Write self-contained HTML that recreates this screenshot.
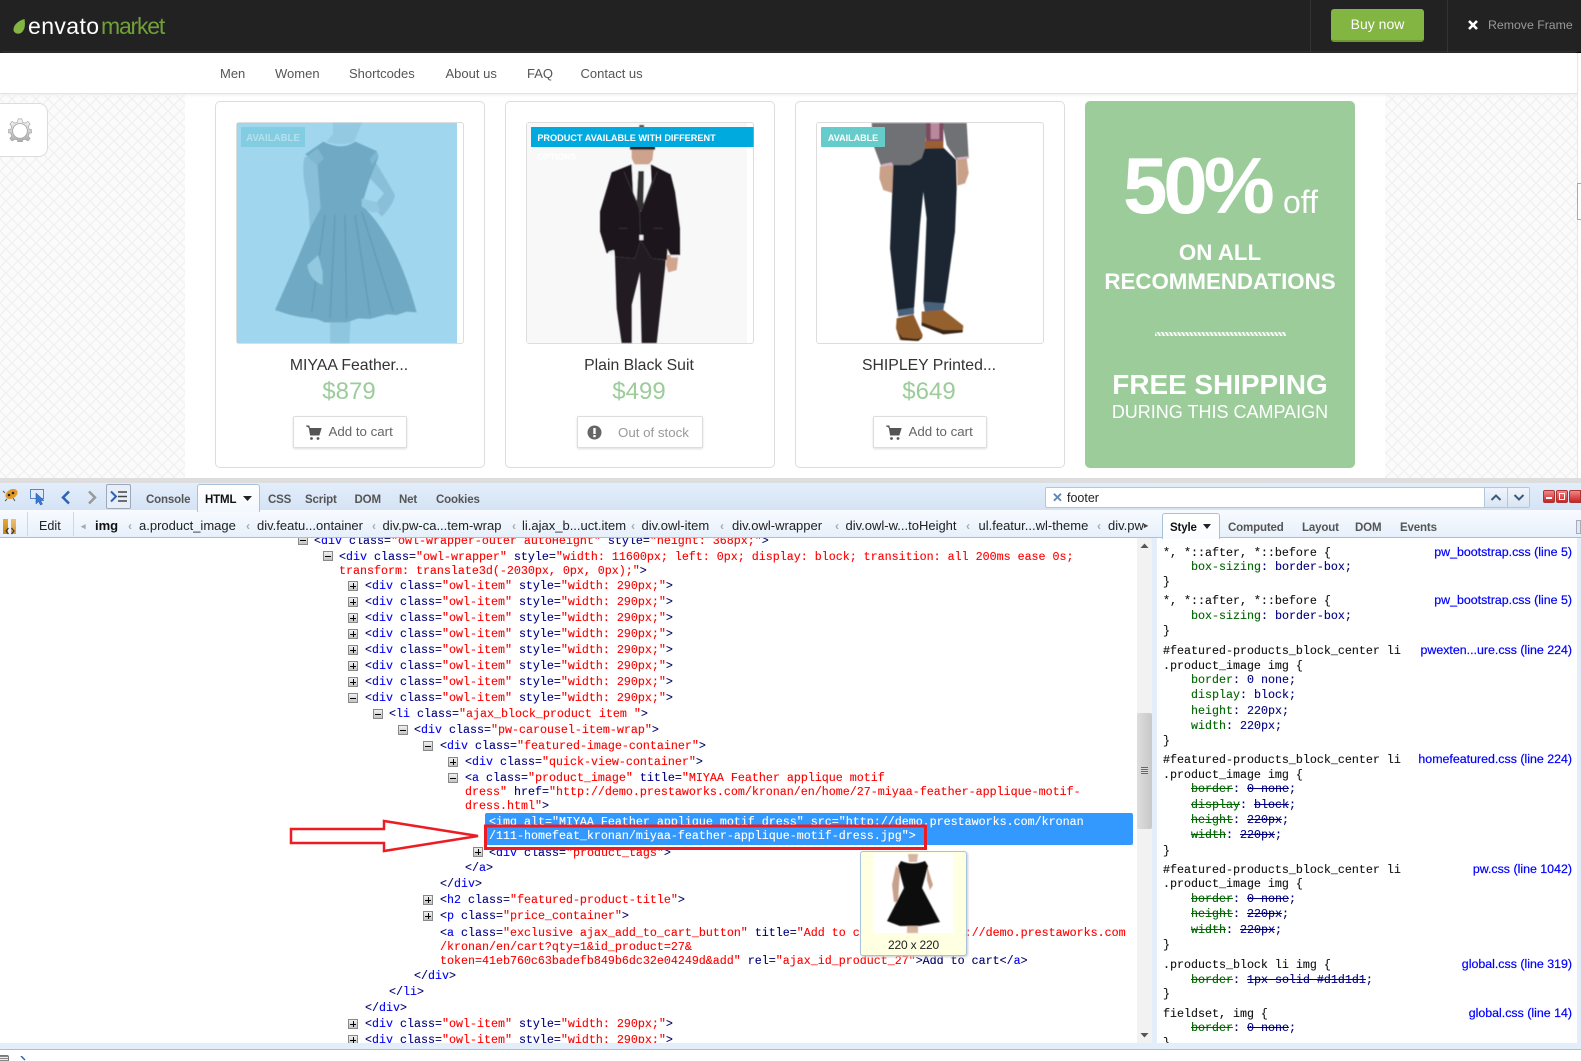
<!DOCTYPE html>
<html><head><meta charset="utf-8"><title>Envato market preview</title>
<style>
html,body{margin:0;padding:0;background:#fff}
#p{position:relative;width:1581px;height:1061px;overflow:hidden;background:#fff;font-family:"Liberation Sans",sans-serif}
.a{position:absolute}
.t{position:absolute;white-space:pre;line-height:20px;height:20px}
.l{position:absolute;white-space:pre;line-height:14px;height:14px;margin-top:1px;font:11.67px/14px "Liberation Mono",monospace;color:#00006a;-webkit-text-stroke:.12px currentColor}
.l b{font-weight:normal;color:#0000f0}
.l i{font-style:normal;color:#000080}
.l u{text-decoration:none;color:#f00}
.l s{text-decoration:line-through}
.l .g{color:#006400}
.l .v{color:#000080}
.l.k{color:#111}
.h{position:absolute;left:1172px;width:400px;text-align:right;font:12.4px/14px "Liberation Sans",sans-serif;color:#00f;-webkit-text-stroke:.2px #00f}
.x{position:absolute;width:8px;height:8px;border:1px solid #888;background:linear-gradient(#f0f0f0,#c4c4c4)}
.x:before{content:"";position:absolute;left:1px;top:3.500px;width:6px;height:1px;background:#000}
.x.p:after{content:"";position:absolute;left:3.500px;top:1px;width:1px;height:6px;background:#000}
.card{position:absolute;top:101px;height:367px;background:#fff;border:1px solid #ddd;border-radius:5px;box-sizing:border-box}
.frame{position:absolute;top:122px;height:222px;width:228px;border:1px solid #ddd;border-radius:3px;box-sizing:border-box;background:#fff}
.title{position:absolute;top:356px;width:268px;text-align:center;font-size:15.800px;line-height:20px;color:#333}
.price{position:absolute;top:377px;width:268px;text-align:center;font-size:24px;line-height:30px;color:#9bcc9a}
.btn{position:absolute;top:416px;height:32px;background:#fff;border:1px solid #ddd;border-radius:2px;box-shadow:0 1px 2px #ddd;box-sizing:border-box}
.tab{position:absolute;top:490px;font:bold 11.5px/20px "Liberation Sans",sans-serif;letter-spacing:-.15px;color:#555;white-space:pre}
.cr{position:absolute;top:516px;font:13px/20px "Liberation Sans",sans-serif;color:#222;white-space:pre}
.ar{position:absolute;top:516px;font:bold 12px/20px "Liberation Sans",sans-serif;color:#aaa}
.st{position:absolute;top:518px;font:bold 11.5px/20px "Liberation Sans",sans-serif;letter-spacing:-.15px;color:#555;white-space:pre}
.nv{position:absolute;top:64px;font-size:13px;line-height:20px;color:#555;white-space:pre}
.gt{position:absolute;left:1085px;width:270px;text-align:center;color:#fff;white-space:pre}
</style></head><body><div id="p">

<!-- page background pattern -->
<svg class="a" style="left:0;top:93px" width="1581" height="385">
<defs><pattern id="w" width="12" height="12" patternUnits="userSpaceOnUse"><rect width="12" height="12" fill="#fbfbfb"/><path d="M0 6L6 0M6 12L12 6M0 6L6 12M6 0L12 6" stroke="#f0f0f0" stroke-width="1.200" fill="none"/></pattern>
<filter id="bl" x="-5%" y="-5%" width="110%" height="110%"><feGaussianBlur stdDeviation="1.500"/></filter>
<filter id="bs" x="-5%" y="-5%" width="110%" height="110%"><feGaussianBlur stdDeviation=".4"/></filter></defs>
<rect width="185" height="385" fill="url(#w)"/><rect x="1385" width="192" height="385" fill="url(#w)"/></svg>

<!-- top bar -->
<div class="a" style="left:0;top:0;width:1581px;height:52px;background:#222;border-bottom:1px solid #000"></div>
<div class="a" style="left:1310px;top:0;width:1px;height:52px;background:#333"></div>
<div class="a" style="left:1447px;top:0;width:1px;height:52px;background:#333"></div>
<svg class="a" style="left:12px;top:18px" width="15" height="17"><path d="M12.500 1C13.500 7 13 12 9 15C6 16.500 2.500 15.500 1.500 12.500C1 8 5 3 12.500 1Z" fill="#82b541"/></svg>
<div class="t" style="left:28px;top:14px;line-height:24px;height:24px;font-size:23px;letter-spacing:.4px;color:#fff">envato</div>
<div class="t" style="left:101px;top:14px;line-height:24px;height:24px;font-size:23px;letter-spacing:-1.200px;color:#70a038;font-weight:normal">market</div>
<div class="a" style="left:1331px;top:9px;width:93px;height:33px;box-sizing:border-box;background:#82b541;border-bottom:2px solid #6a9a2f;border-radius:3px;text-align:center;color:#fff;font-size:14px;line-height:31px">Buy now</div>
<svg class="a" style="left:1467px;top:19px" width="12" height="12"><path d="M2 2L10 10M10 2L2 10" stroke="#fff" stroke-width="2.600"/></svg>
<div class="t" style="left:1488px;top:15px;font-size:12.300px;color:#999">Remove Frame</div>

<!-- nav -->
<div class="a" style="left:0;top:53px;width:1577px;height:40px;background:#fff;border-bottom:1px solid #e3e3e3;box-shadow:0 1px 3px #eee"></div>
<div class="a" style="left:1577px;top:53px;width:1px;height:425px;background:#e6e6e6"></div>
<div class="a" style="left:1577px;top:183px;width:4px;height:37px;background:#fff;border:1px solid #aaa;border-right:0;box-sizing:border-box"></div>
<div class="nv" style="left:220px">Men</div>
<div class="nv" style="left:275px">Women</div>
<div class="nv" style="left:349px">Shortcodes</div>
<div class="nv" style="left:445.500px">About us</div>
<div class="nv" style="left:527px">FAQ</div>
<div class="nv" style="left:580.500px">Contact us</div>

<!-- gear -->
<div class="a" style="left:-10px;top:103px;width:58px;height:54px;background:#fff;border:1px solid #ddd;border-radius:9px;box-sizing:border-box"></div>
<svg class="a" style="left:8px;top:118px" width="24" height="24" viewBox="0 0 26 26"><defs><linearGradient id="gg" x1="0" y1="0" x2="0" y2="1"><stop offset="0" stop-color="#f8f8f8"/><stop offset="1" stop-color="#aaa"/></linearGradient></defs><path d="M11 1H15L15.700 4.500L18.500 5.600L21.500 3.600L24 6.500L22 9.300L23 12L26 12.800V16L23 16.700L22 19.500L24 22.300L21.500 24.800L18.500 23L15.700 24V26H10.500V24L7.500 23L4.500 24.800L2 22.300L4 19.500L3 16.700L0 16V12.800L3 12L4 9.300L2 6.500L4.500 3.600L7.500 5.600L10.300 4.500Z" fill="url(#gg)" stroke="#999" stroke-width=".6"/><circle cx="13" cy="14" r="8" fill="#fff" stroke="#aaa"/></svg>

<!-- cards -->
<div class="card" style="left:215px;width:270px"></div>
<div class="card" style="left:505px;width:270px"></div>
<div class="card" style="left:795px;width:270px"></div>

<div class="frame" style="left:236px"></div>
<div class="frame" style="left:526px"></div>
<div class="frame" style="left:816px"></div>

<!-- dress -->
<svg class="a" style="left:230px;top:115px" width="240" height="235" viewBox="0 0 720 705">
<rect x="21" y="24" width="660" height="660" fill="#a0d7ef"/>
<g filter="url(#bl)">
<path d="M308 24H395L385 50L372 80Q330 95 290 80L310 55Z" fill="#93c9e1"/>
<path d="M300 620V684H358L362 620Z" fill="#8fc6df"/>
<path d="M224 125Q212 170 235 260L240 350L234 455Q240 495 275 512L280 470L262 420L275 300L268 135Z" fill="#89bfd8"/>
<path d="M430 130Q470 195 495 240Q490 270 455 305L442 290L395 250L440 262L462 235L420 190Z" fill="#89bfd8"/>
<path d="M280 80Q335 108 376 80L440 108L446 125L420 190L395 270Q500 370 560 592L530 590L500 600L470 598L420 612L385 610L350 622L285 622L260 612L210 606L175 598L135 585Q200 440 240 340L272 280L262 140L225 118Z" fill="#6fa9c4"/>
<path d="M230 125L262 100L282 130L262 150ZM420 130L440 108L446 125L425 150Z" fill="#7fb7d0"/>
<path d="M285 300L245 590M315 300L300 610M345 300L350 610M375 300L420 600M395 290L490 590" stroke="#639bb6" stroke-width="4" fill="none"/>
<path d="M232 450Q238 495 278 510L278 470L265 420Z" fill="#92c8e0"/>
<path d="M395 250L440 262L452 290L425 292L395 275Z" fill="#92c8e0"/>
</g>
<path d="M33 36H225V96H33Z" fill="#83cde3"/>
<text x="129" y="78" text-anchor="middle" font-family="Liberation Sans" font-weight="bold" font-size="29" fill="#b4e0ee">AVAILABLE</text>
</svg>

<!-- suit -->
<svg class="a" style="left:520px;top:115px" width="245" height="235" viewBox="0 0 735 705">
<rect x="21" y="24" width="660" height="660" fill="#f8f8f8"/>
<g filter="url(#bl)">
<path d="M358 30H372V40H358Z" fill="#555"/>
<path d="M335 96H402L397 135L385 150H345L335 130Z" fill="#cda38d"/>
<path d="M330 90H405V104H330Z" fill="#2a221f"/>
<path d="M335 148H392L390 262L365 350L340 250Z" fill="#f7f7f7"/>
<path d="M355 168H372L370 280L360 290L350 260Z" fill="#333"/>
<path d="M440 420H475L470 465L445 472L438 450Z" fill="#d1a58e"/>
<path d="M285 425L290 580L305 684H335L335 570L360 470L365 684H410L435 460L437 435L395 430L362 375L345 430Z" fill="#241f24"/>
<path d="M335 148L275 172L240 290L240 350L260 415L283 405L285 425L345 430L362 375L395 430L440 435L442 400L452 420L480 420L480 340L465 230L452 178L392 148L395 200L362 290L340 240Z" fill="#1d191d"/>
<path d="M312 170L358 280L362 375M412 170L365 285M297 340H322M400 340H428" stroke="#38323a" stroke-width="3" fill="none"/>
<path d="M358 360H370V375H358ZM265 410L280 405L282 420L272 420ZM452 420H476L474 428H452Z" fill="#eee"/>
</g>
<rect x="33" y="36" width="668" height="60" rx="2" fill="#00a9de"/>
<text x="52" y="78" font-family="Liberation Sans" font-weight="bold" font-size="27.500" fill="#fff">PRODUCT AVAILABLE WITH DIFFERENT</text>
<text x="52" y="134" font-family="Liberation Sans" font-weight="bold" font-size="26" fill="#fff">OPTIONS</text>
</svg>

<!-- jeans -->
<svg class="a" style="left:810px;top:115px" width="245" height="235" viewBox="0 0 735 705">
<g filter="url(#bl)">
<path d="M210 155L262 150L265 215L250 235L220 225L208 190Z" fill="#c9a088"/>
<path d="M440 130H470L476 175L465 205L442 212Z" fill="#c9a088"/>
<path d="M250 150L300 150L345 100L400 98L438 135L440 220L435 350L405 565L340 565L350 310L340 230L330 330L312 580L262 590L240 400Z" fill="#1d2530"/>
<path d="M185 24H470L476 130L440 135L410 90L400 40L350 40L345 100L335 130L300 150L250 150L215 157L190 90Z" fill="#707174"/>
<path d="M215 157L248 150L246 142L214 148ZM442 135L476 130L474 124L440 128Z" fill="#d6b0bc"/>
<path d="M348 24H400V80H348Z" fill="#7c4c5e"/><path d="M362 24H388V72H362Z" fill="#b9889c"/>
<path d="M345 78H400V100H345Z" fill="#9c5f30"/>
<path d="M262 585L312 578L312 597L265 605ZM340 560L403 565L400 585L345 592Z" fill="#4a627c"/>
<path d="M260 610L310 598L338 660L336 670L320 678L270 675L258 640Z" fill="#8f5a2c"/>
<path d="M335 590L400 585L460 632L458 648L400 655L335 630Z" fill="#94602f"/>
<path d="M335 622L400 645L458 645L458 652L400 658L335 632ZM262 650L275 675L325 678L336 668L320 672L278 668Z" fill="#3a2818"/>
</g>
<rect x="33" y="36" width="192" height="60" rx="3" fill="#66cccb"/>
<text x="129" y="78" text-anchor="middle" font-family="Liberation Sans" font-weight="bold" font-size="27" fill="#fff">AVAILABLE</text>
</svg>

<div class="title" style="left:215px">MIYAA Feather...</div>
<div class="title" style="left:505px">Plain Black Suit</div>
<div class="title" style="left:795px">SHIPLEY Printed...</div>
<div class="price" style="left:215px">$879</div>
<div class="price" style="left:505px">$499</div>
<div class="price" style="left:795px">$649</div>

<div class="btn" style="left:293px;width:114px"></div>
<div class="btn" style="left:577px;width:126px"></div>
<div class="btn" style="left:873px;width:114px"></div>
<svg class="a" style="left:306px;top:425px" width="16" height="16" viewBox="0 0 16 16"><path d="M0 1H3L4.500 10H13L15 3.500H3.800" fill="#555" stroke="#555"/><circle cx="5.500" cy="13.500" r="1.400" fill="#555"/><circle cx="12" cy="13.500" r="1.400" fill="#555"/></svg>
<div class="t" style="left:328.500px;top:422px;font-size:13.300px;color:#666">Add to cart</div>
<svg class="a" style="left:587px;top:425px" width="15" height="15"><circle cx="7.500" cy="7.500" r="7" fill="#666"/><rect x="6.300" y="3" width="2.400" height="6" fill="#fff"/><rect x="6.300" y="10" width="2.400" height="2.200" fill="#fff"/></svg>
<div class="t" style="left:618px;top:423px;font-size:13.300px;color:#999">Out of stock</div>
<svg class="a" style="left:886px;top:425px" width="16" height="16" viewBox="0 0 16 16"><path d="M0 1H3L4.500 10H13L15 3.500H3.800" fill="#555" stroke="#555"/><circle cx="5.500" cy="13.500" r="1.400" fill="#555"/><circle cx="12" cy="13.500" r="1.400" fill="#555"/></svg>
<div class="t" style="left:908.500px;top:422px;font-size:13.300px;color:#666">Add to cart</div>

<!-- promo -->
<div class="a" style="left:1085px;top:101px;width:270px;height:367px;background:#9bcc9a;border-radius:5px"></div>
<div class="t" style="left:1123px;top:141px;height:90px;line-height:90px;font-size:80px;font-weight:bold;letter-spacing:-4.200px;color:#fff">50%</div>
<div class="t" style="left:1283px;top:184px;height:36px;line-height:36px;font-size:32px;color:#fff">off</div>
<div class="gt" style="top:240px;font:bold 22.300px/26px 'Liberation Sans',sans-serif">ON ALL</div>
<div class="gt" style="top:269px;font:bold 22.300px/26px 'Liberation Sans',sans-serif">RECOMMENDATIONS</div>
<div class="a" style="left:1155px;top:332px;width:131px;height:4px;background:repeating-linear-gradient(60deg,#fff 0,#fff 1.500px,#cfe6ce 1.500px,#9bcc9a 3.500px)"></div>
<div class="gt" style="top:369px;font:bold 27.900px/32px 'Liberation Sans',sans-serif">FREE SHIPPING</div>
<div class="gt" style="top:401px;font:18px/22px 'Liberation Sans',sans-serif">DURING THIS CAMPAIGN</div>

<!-- devtools body -->
<div class="a" style="left:0;top:478px;width:1581px;height:5px;background:#ddd"></div>
<div class="a" style="left:0;top:483px;width:1581px;height:578px;background:#fff"></div>

<!-- left pane lines -->
<div class="x m" style="left:298px;top:535px"></div>
<div class="l" style="left:314px;top:533px">&lt;<b>div</b> <i>class</i>=<u>"owl-wrapper-outer autoHeight"</u> <i>style</i>=<u>"height: 368px;"</u>&gt;</div>
<div class="x m" style="left:323px;top:551px"></div>
<div class="l" style="left:339px;top:549px">&lt;<b>div</b> <i>class</i>=<u>"owl-wrapper"</u> <i>style</i>=<u>"width: 11600px; left: 0px; display: block; transition: all 200ms ease 0s;</u></div>
<div class="l" style="left:339px;top:563px"><u>transform: translate3d(-2030px, 0px, 0px);"</u>&gt;</div>

<div class="x p" style="left:348px;top:581px"></div><div class="l" style="left:365px;top:578px">&lt;<b>div</b> <i>class</i>=<u>"owl-item"</u> <i>style</i>=<u>"width: 290px;"</u>&gt;</div>
<div class="x p" style="left:348px;top:597px"></div><div class="l" style="left:365px;top:594px">&lt;<b>div</b> <i>class</i>=<u>"owl-item"</u> <i>style</i>=<u>"width: 290px;"</u>&gt;</div>
<div class="x p" style="left:348px;top:613px"></div><div class="l" style="left:365px;top:610px">&lt;<b>div</b> <i>class</i>=<u>"owl-item"</u> <i>style</i>=<u>"width: 290px;"</u>&gt;</div>
<div class="x p" style="left:348px;top:629px"></div><div class="l" style="left:365px;top:626px">&lt;<b>div</b> <i>class</i>=<u>"owl-item"</u> <i>style</i>=<u>"width: 290px;"</u>&gt;</div>
<div class="x p" style="left:348px;top:645px"></div><div class="l" style="left:365px;top:642px">&lt;<b>div</b> <i>class</i>=<u>"owl-item"</u> <i>style</i>=<u>"width: 290px;"</u>&gt;</div>
<div class="x p" style="left:348px;top:661px"></div><div class="l" style="left:365px;top:658px">&lt;<b>div</b> <i>class</i>=<u>"owl-item"</u> <i>style</i>=<u>"width: 290px;"</u>&gt;</div>
<div class="x p" style="left:348px;top:677px"></div><div class="l" style="left:365px;top:674px">&lt;<b>div</b> <i>class</i>=<u>"owl-item"</u> <i>style</i>=<u>"width: 290px;"</u>&gt;</div>
<div class="x m" style="left:348px;top:693px"></div><div class="l" style="left:365px;top:690px">&lt;<b>div</b> <i>class</i>=<u>"owl-item"</u> <i>style</i>=<u>"width: 290px;"</u>&gt;</div>
<div class="x m" style="left:373px;top:709px"></div><div class="l" style="left:389px;top:706px">&lt;<b>li</b> <i>class</i>=<u>"ajax_block_product item "</u>&gt;</div>
<div class="x m" style="left:398px;top:725px"></div><div class="l" style="left:414px;top:722px">&lt;<b>div</b> <i>class</i>=<u>"pw-carousel-item-wrap"</u>&gt;</div>
<div class="x m" style="left:423px;top:741px"></div><div class="l" style="left:440px;top:738px">&lt;<b>div</b> <i>class</i>=<u>"featured-image-container"</u>&gt;</div>
<div class="x p" style="left:448px;top:757px"></div><div class="l" style="left:465px;top:754px">&lt;<b>div</b> <i>class</i>=<u>"quick-view-container"</u>&gt;</div>
<div class="x m" style="left:448px;top:773px"></div><div class="l" style="left:465px;top:770px">&lt;<b>a</b> <i>class</i>=<u>"product_image"</u> <i>title</i>=<u>"MIYAA Feather applique motif</u></div>
<div class="l" style="left:465px;top:784px"><u>dress"</u> <i>href</i>=<u>"http://demo.prestaworks.com/kronan/en/home/27-miyaa-feather-applique-motif-</u></div>
<div class="l" style="left:465px;top:798px"><u>dress.html"</u>&gt;</div>

<div class="a" style="left:485px;top:813px;width:648px;height:32px;background:#39f;border-radius:2px"></div>
<div class="l" style="left:489px;top:814px;color:#fff">&lt;img alt="MIYAA Feather applique motif dress" src="http://demo.prestaworks.com/kronan</div>
<div class="l" style="left:489px;top:828px;color:#fff">/111-homefeat_kronan/miyaa-feather-applique-motif-dress.jpg"&gt;</div>

<div class="x p" style="left:473px;top:847px"></div><div class="l" style="left:489px;top:845px">&lt;<b>div</b> <i>class</i>=<u>"product_tags"</u>&gt;</div>
<div class="l" style="left:465px;top:860px">&lt;/<b>a</b>&gt;</div>
<div class="l" style="left:440px;top:876px">&lt;/<b>div</b>&gt;</div>
<div class="x p" style="left:423px;top:895px"></div><div class="l" style="left:440px;top:892px">&lt;<b>h2</b> <i>class</i>=<u>"featured-product-title"</u>&gt;</div>
<div class="x p" style="left:423px;top:911px"></div><div class="l" style="left:440px;top:908px">&lt;<b>p</b> <i>class</i>=<u>"price_container"</u>&gt;</div>
<div class="l" style="left:440px;top:925px">&lt;<b>a</b> <i>class</i>=<u>"exclusive ajax_add_to_cart_button"</u> <i>title</i>=<u>"Add to cart"</u> <i>href</i>=<u>"http://demo.prestaworks.com</u></div>
<div class="l" style="left:440px;top:939px"><u>/kronan/en/cart?qty=1&amp;id_product=27&amp;</u></div>
<div class="l" style="left:440px;top:953px"><u>token=41eb760c63badefb849b6dc32e04249d&amp;add"</u> <i>rel</i>=<u>"ajax_id_product_27"</u>&gt;Add to cart&lt;/<b>a</b>&gt;</div>
<div class="l" style="left:414px;top:968px">&lt;/<b>div</b>&gt;</div>
<div class="l" style="left:389px;top:984px">&lt;/<b>li</b>&gt;</div>
<div class="l" style="left:365px;top:1000px">&lt;/<b>div</b>&gt;</div>
<div class="x p" style="left:348px;top:1019px"></div><div class="l" style="left:365px;top:1016px">&lt;<b>div</b> <i>class</i>=<u>"owl-item"</u> <i>style</i>=<u>"width: 290px;"</u>&gt;</div>
<div class="x p" style="left:348px;top:1035px"></div><div class="l" style="left:365px;top:1032px">&lt;<b>div</b> <i>class</i>=<u>"owl-item"</u> <i>style</i>=<u>"width: 290px;"</u>&gt;</div>

<!-- left scrollbar -->
<div class="a" style="left:1137px;top:538px;width:15px;height:505px;background:#f2f2f2"></div>
<div class="a" style="left:1137px;top:713px;width:15px;height:116px;background:linear-gradient(90deg,#ddd,#c8c8c8);border-radius:2px"></div>
<div class="a" style="left:1141px;top:767px;width:7px;height:7px;background:repeating-linear-gradient(#666 0,#666 1px,#ddd 1px,#ddd 2px)"></div>
<svg class="a" style="left:1139px;top:542px" width="11" height="7"><path d="M1.500 6L5.500 1.500L9.500 6Z" fill="#555"/></svg>
<svg class="a" style="left:1139px;top:1032px" width="11" height="7"><path d="M1.500 1L5.500 5.500L9.500 1Z" fill="#555"/></svg>
<div class="a" style="left:1152px;top:538px;width:5px;height:505px;background:#e4eefa"></div>
<div class="a" style="left:1577px;top:538px;width:4px;height:505px;background:#e4eefa"></div>

<!-- right pane -->
<div class="l k" style="left:1163px;top:545px">*, *::after, *::before {</div>
<div class="h" style="top:545px">pw_bootstrap.css (line 5)</div>
<div class="l" style="left:1191px;top:559px"><span class="g">box-sizing</span>: <span class="v">border-box</span>;</div>
<div class="l k" style="left:1163px;top:574px">}</div>
<div class="l k" style="left:1163px;top:593px">*, *::after, *::before {</div>
<div class="h" style="top:593px">pw_bootstrap.css (line 5)</div>
<div class="l" style="left:1191px;top:608px"><span class="g">box-sizing</span>: <span class="v">border-box</span>;</div>
<div class="l k" style="left:1163px;top:623px">}</div>
<div class="l k" style="left:1163px;top:643px">#featured-products_block_center li</div>
<div class="h" style="top:643px">pwexten...ure.css (line 224)</div>
<div class="l k" style="left:1163px;top:658px">.product_image img {</div>
<div class="l" style="left:1191px;top:672px"><span class="g">border</span>: <span class="v">0 none</span>;</div>
<div class="l" style="left:1191px;top:687px"><span class="g">display</span>: <span class="v">block</span>;</div>
<div class="l" style="left:1191px;top:703px"><span class="g">height</span>: <span class="v">220px</span>;</div>
<div class="l" style="left:1191px;top:718px"><span class="g">width</span>: <span class="v">220px</span>;</div>
<div class="l k" style="left:1163px;top:733px">}</div>
<div class="l k" style="left:1163px;top:752px">#featured-products_block_center li</div>
<div class="h" style="top:752px">homefeatured.css (line 224)</div>
<div class="l k" style="left:1163px;top:767px">.product_image img {</div>
<div class="l" style="left:1191px;top:781px"><s class="g">border</s>: <s class="v">0 none</s>;</div>
<div class="l" style="left:1191px;top:797px"><s class="g">display</s>: <s class="v">block</s>;</div>
<div class="l" style="left:1191px;top:812px"><s class="g">height</s>: <s class="v">220px</s>;</div>
<div class="l" style="left:1191px;top:827px"><s class="g">width</s>: <s class="v">220px</s>;</div>
<div class="l k" style="left:1163px;top:843px">}</div>
<div class="l k" style="left:1163px;top:862px">#featured-products_block_center li</div>
<div class="h" style="top:862px">pw.css (line 1042)</div>
<div class="l k" style="left:1163px;top:876px">.product_image img {</div>
<div class="l" style="left:1191px;top:891px"><s class="g">border</s>: <s class="v">0 none</s>;</div>
<div class="l" style="left:1191px;top:906px"><s class="g">height</s>: <s class="v">220px</s>;</div>
<div class="l" style="left:1191px;top:922px"><s class="g">width</s>: <s class="v">220px</s>;</div>
<div class="l k" style="left:1163px;top:937px">}</div>
<div class="l k" style="left:1163px;top:957px">.products_block li img {</div>
<div class="h" style="top:957px">global.css (line 319)</div>
<div class="l" style="left:1191px;top:972px"><s class="g">border</s>: <s class="v">1px solid #d1d1d1</s>;</div>
<div class="l k" style="left:1163px;top:986px">}</div>
<div class="l k" style="left:1163px;top:1006px">fieldset, img {</div>
<div class="h" style="top:1006px">global.css (line 14)</div>
<div class="l" style="left:1191px;top:1020px"><s class="g">border</s>: <s class="v">0 none</s>;</div>
<div class="l k" style="left:1163px;top:1035px">}</div>

<!-- arrow + red box -->
<svg class="a" style="left:0;top:0" width="1581" height="1061">
<path d="M291 829H384V821L478 836L384 851V843H291Z" fill="#fff" stroke="#ed1c24" stroke-width="2.500"/>
<rect x="485.500" y="826" width="440" height="22.500" fill="none" stroke="#ed1c24" stroke-width="3"/>
</svg>

<!-- tooltip -->
<div class="a" style="left:860px;top:851px;width:107px;height:105px;background:#ffffe1;border:1px solid #a7c4dc;border-radius:3px;box-sizing:border-box;box-shadow:1px 1px 2px #ccc"></div>
<div class="a" style="left:873px;top:853px;width:80px;height:80px;background:#fff"></div>
<svg class="a" style="left:0;top:0" width="1581" height="1061">
<g filter="url(#bs)">
<path d="M908 854H918L917 862H909Z" fill="#d6b5a0"/>
<path d="M907 925H918V933H907Z" fill="#d6b5a0"/>
<path d="M896 866L892 885L894 902L898 902L899 885L900 870ZM927 866L933 885L930 890L927 880Z" fill="#c8a18c"/>
<path d="M901 861Q913 866 925 861L928 866L922 888L940 922L920 926L900 926L887 921L904 888L898 866Z" fill="#0c0c0c"/>
</g>
</svg>
<div class="t" style="left:860px;top:935px;width:107px;text-align:center;font-size:12px;color:#222;letter-spacing:-.2px">220 x 220</div>

<!-- toolbar row 1 -->
<div class="a" style="left:0;top:483px;width:1581px;height:27px;background:linear-gradient(#e3eefb,#d4e3f5)"></div>
<div class="a" style="left:0;top:510px;width:1581px;height:28px;box-sizing:border-box;background:linear-gradient(#f8fbff,#e6f0fb);border-bottom:1px solid #a9c0da"></div>
<div class="a" style="left:197px;top:484px;width:63px;height:28px;box-sizing:border-box;background:linear-gradient(#fff,#f3f8fe);border:1px solid #a9c0da;border-bottom:0;border-radius:3px 3px 0 0"></div>
<svg class="a" style="left:2px;top:487px" width="18" height="15"><ellipse cx="9.500" cy="7" rx="6.500" ry="4.500" transform="rotate(-30 9.500 7)" fill="#e39a2a"/><circle cx="7" cy="8" r="1.300" fill="#222"/><circle cx="11" cy="6" r="1.300" fill="#222"/><path d="M3 6L1 4M5 12L3 14M11 11L13 14" stroke="#555"/></svg>
<svg class="a" style="left:30px;top:489px" width="17" height="17"><rect x=".5" y=".5" width="13" height="9" fill="#dfeafa" stroke="#5b86c4"/><path d="M6 4V15L8.500 12.500L10.500 16L12.500 15L10.500 11.500H14Z" fill="#3a78d6" stroke="#1c4f9f" stroke-width=".5"/></svg>
<svg class="a" style="left:60px;top:490px" width="12" height="15"><path d="M9 1.500L3 7.500L9 13.500" fill="none" stroke="#2d62b8" stroke-width="2.500"/></svg>
<svg class="a" style="left:86px;top:490px" width="12" height="15"><path d="M3 1.500L9 7.500L3 13.500" fill="none" stroke="#999" stroke-width="2.500"/></svg>
<div class="a" style="left:106px;top:484px;width:25px;height:25px;box-sizing:border-box;background:#e7eef7;border:1px solid #9aa9bb;border-radius:2px"></div>
<svg class="a" style="left:110px;top:490px" width="18" height="13"><path d="M1 1.500L6 6.500L1 11.500" fill="none" stroke="#2d62b8" stroke-width="2"/><path d="M8 2H17M8 6.500H17M8 11H17" stroke="#444" stroke-width="1.500"/></svg>
<div class="tab" style="left:146px">Console</div>
<div class="tab" style="left:205px;color:#111">HTML</div>
<svg class="a" style="left:243px;top:496px" width="9" height="6"><path d="M0 0H9L4.500 5Z" fill="#222"/></svg>
<div class="tab" style="left:268px">CSS</div>
<div class="tab" style="left:305px">Script</div>
<div class="tab" style="left:354.500px">DOM</div>
<div class="tab" style="left:399px">Net</div>
<div class="tab" style="left:436px">Cookies</div>

<!-- search box -->
<div class="a" style="left:1045px;top:487px;width:485px;height:21px;box-sizing:border-box;background:#fff;border:1px solid #b3c6dc;border-radius:2px"></div>
<div class="t" style="left:1052px;top:488px;font-size:13px;font-weight:bold;color:#5b86b8">✕</div>
<div class="t" style="left:1067px;top:488px;font-size:12.500px;color:#222">footer</div>
<div class="a" style="left:1484px;top:488px;width:45px;height:19px;background:linear-gradient(#f0f5fb,#d9e5f3)"></div>
<div class="a" style="left:1507px;top:488px;width:1px;height:19px;background:#b3c6dc"></div>
<div class="a" style="left:1484px;top:488px;width:1px;height:19px;background:#b3c6dc"></div>
<svg class="a" style="left:1490px;top:493px" width="12" height="9"><path d="M1.500 7L6 2.500L10.500 7" fill="none" stroke="#3c5a7c" stroke-width="2"/></svg>
<svg class="a" style="left:1513px;top:493px" width="12" height="9"><path d="M1.500 2L6 6.500L10.500 2" fill="none" stroke="#3c5a7c" stroke-width="2"/></svg>
<div class="a" style="left:1543px;top:490px;width:12px;height:13px;background:linear-gradient(#e88,#c22);border-radius:2px;border:1px solid #a33;box-sizing:border-box"></div>
<div class="a" style="left:1546px;top:497px;width:6px;height:2px;background:#fff"></div>
<div class="a" style="left:1556px;top:490px;width:12px;height:13px;background:linear-gradient(#e88,#c22);border-radius:2px;border:1px solid #a33;box-sizing:border-box"></div>
<div class="a" style="left:1559px;top:493px;width:6px;height:7px;border:1px solid #fff;box-sizing:border-box"></div>
<div class="a" style="left:1569px;top:490px;width:12px;height:13px;background:linear-gradient(#e88,#c22);border-radius:2px 0 0 2px;border:1px solid #a33;box-sizing:border-box"></div>

<!-- breadcrumb -->
<div class="a" style="left:3px;top:519px;width:5px;height:15px;background:linear-gradient(#e8a838,#c98415)"></div>
<div class="a" style="left:11px;top:519px;width:5px;height:15px;background:linear-gradient(#ecc070,#d8983a)"></div>
<svg class="a" style="left:5px;top:527px" width="10" height="8"><path d="M3.500 1L1 4L3.500 7M6.500 1L9 4L6.500 7" fill="none" stroke="#333" stroke-width="1.200"/></svg>
<div class="a" style="left:27px;top:512px;width:1px;height:24px;background:#cdd8e6"></div>
<div class="cr" style="left:39px;font-size:12.600px">Edit</div>
<div class="a" style="left:73px;top:512px;width:1px;height:24px;background:#cdd8e6"></div>
<div class="ar" style="left:81px;font-size:9px">&#9666;</div>
<div class="cr" style="left:95px;font-weight:bold;color:#111">img</div>
<div class="ar" style="left:128px">‹</div><div class="cr" style="left:139px">a.product_image</div>
<div class="ar" style="left:246px">‹</div><div class="cr" style="left:257px">div.featu...ontainer</div>
<div class="ar" style="left:372px">‹</div><div class="cr" style="left:382.500px">div.pw-ca...tem-wrap</div>
<div class="ar" style="left:512px">‹</div><div class="cr" style="left:522px">li.ajax_b...uct.item</div>
<div class="ar" style="left:631px">‹</div><div class="cr" style="left:641.500px">div.owl-item</div>
<div class="ar" style="left:720px">‹</div><div class="cr" style="left:732px">div.owl-wrapper</div>
<div class="ar" style="left:835px">‹</div><div class="cr" style="left:845.500px">div.owl-w...toHeight</div>
<div class="ar" style="left:966px">‹</div><div class="cr" style="left:978.500px">ul.featur...wl-theme</div>
<div class="ar" style="left:1097px">‹</div><div class="cr" style="left:1108px">div.pw</div>
<div class="ar" style="left:1144px;color:#444;font-size:8px">&#9656;</div>

<!-- style tabs -->
<div class="a" style="left:1162px;top:513px;width:58px;height:26px;box-sizing:border-box;background:linear-gradient(#fff,#fafcff);border:1px solid #a9c0da;border-bottom:0;border-radius:3px 3px 0 0"></div>
<div class="st" style="left:1170px;color:#111">Style</div>
<svg class="a" style="left:1203px;top:524px" width="8" height="6"><path d="M0 0H8L4 5Z" fill="#222"/></svg>
<div class="st" style="left:1228px">Computed</div>
<div class="st" style="left:1302px">Layout</div>
<div class="st" style="left:1355px">DOM</div>
<div class="st" style="left:1400px">Events</div>
<div class="a" style="left:1576px;top:520px;width:5px;height:14px;background:#dfe8f3;border:1px solid #aab;box-sizing:border-box"></div>

<!-- bottom strip -->
<div class="a" style="left:0;top:1043px;width:1581px;height:6px;background:#e4eefa"></div>
<div class="a" style="left:0;top:1049px;width:1581px;height:1px;background:#bbb"></div>
<div class="a" style="left:0;top:1050px;width:1581px;height:11px;background:#fff"></div>
<div class="a" style="left:-2px;top:1055px;width:11px;height:8px;box-sizing:border-box;border:1px solid #777;background:repeating-linear-gradient(#888 0,#888 1px,#eee 1px,#eee 2px);border-radius:2px"></div>
<svg class="a" style="left:20px;top:1056px" width="8" height="5"><path d="M1 0L5 4" stroke="#2d62b8" stroke-width="1.500"/></svg>

</div></body></html>
